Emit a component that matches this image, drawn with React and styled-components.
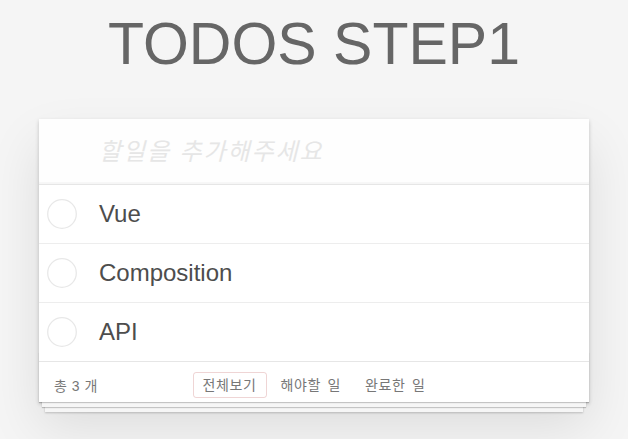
import React from 'react'
import styled, { createGlobalStyle } from 'styled-components'

const todos = [
    { id: 1, title: 'Vue' },
    { id: 2, title: 'Composition' },
    { id: 3, title: 'API' },
]

const filters = ['전체보기', '해야할 일', '완료한 일']

export default function App() {
    return (
        <>
            <GlobalStyle />
            <Page>
                <Title>TODOS STEP1</Title>
                <Card>
                    <NewTodo placeholder="할일을 추가해주세요" />
                    <List>
                        {todos.map(todo => (
                            <Item key={todo.id}>
                                <Toggle>
                                    <svg width="30" height="30" viewBox="0 0 30 30">
                                        <circle cx="15" cy="15" r="14.3" fill="none" stroke="#e8e8e8" strokeWidth="1.3" />
                                    </svg>
                                </Toggle>
                                <Label>{todo.title}</Label>
                            </Item>
                        ))}
                    </List>
                    <Footer>
                        <Count>총 3 개</Count>
                        <Filters>
                            {filters.map((f, i) => (
                                <Filter key={f} selected={i === 0}>{f}</Filter>
                            ))}
                        </Filters>
                        <span />
                    </Footer>
                </Card>
            </Page>
        </>
    )
}

const GlobalStyle = createGlobalStyle`
    html, body {
        margin: 0;
        padding: 0;
        background: #f5f5f5;
    }
    body {
        font-family: "Liberation Sans", "Noto Sans CJK KR", Arial, sans-serif;
        color: #4d4d4d;
        -webkit-font-smoothing: antialiased;
    }
`

const Page = styled.div`
    width: 550px;
    min-height: 439px;
    margin: 0 auto;
    padding: 1px 0 0;
    box-sizing: border-box;
`

const Title = styled.h1`
    margin: 9px 0 41px;
    font-size: 59px;
    line-height: 68px;
    font-weight: 400;
    text-align: center;
    color: #666;
`

const Card = styled.section`
    background: #fff;
    box-shadow: 0 2px 4px 0 rgba(0, 0, 0, 0.2), 0 25px 50px 0 rgba(0, 0, 0, 0.1);
`

const NewTodo = styled.input`
    display: block;
    box-sizing: border-box;
    width: 100%;
    height: 65px;
    margin: 0;
    padding: 16px 16px 16px 60px;
    border: none;
    outline: none;
    background: rgba(0, 0, 0, 0.003);
    box-shadow: inset 0 -2px 1px rgba(0, 0, 0, 0.03);
    font-family: "Liberation Sans", "Noto Sans CJK KR", sans-serif;
    font-size: 24px;
    color: #4d4d4d;

    &::placeholder {
        font-style: italic;
        letter-spacing: 1.9px;
        color: #e6e6e6;
    }
`

const List = styled.ul`
    margin: 0;
    padding: 0;
    list-style: none;
    border-top: 1px solid #e6e6e6;
`

const Item = styled.li`
    display: flex;
    align-items: center;
    border-bottom: 1px solid #ededed;
    font-size: 24px;

    &:last-child {
        border-bottom: none;
    }
`

const Toggle = styled.span`
    display: flex;
    width: 30px;
    height: 30px;
    margin: 0 22px 0 8px;
`

const Label = styled.label`
    padding: 15px 15px 15px 0;
    line-height: 28px;
    color: #4d4d4d;
`

const Footer = styled.footer`
    position: relative;
    display: grid;
    grid-template-columns: 1fr auto 1fr;
    align-items: center;
    height: 20px;
    padding: 10px 15px;
    border-top: 1px solid #e6e6e6;
    color: #777;
    font-size: 14px;
    font-family: "Liberation Sans", "Noto Sans CJK KR", sans-serif;

    &::before {
        content: '';
        position: absolute;
        left: 0;
        right: 0;
        bottom: 0;
        height: 50px;
        overflow: hidden;
        z-index: 0;
        box-shadow: 0 1px 1px rgba(0, 0, 0, 0.2),
            0 8px 0 -3px #f6f6f6,
            0 9px 1px -3px rgba(0, 0, 0, 0.2),
            0 16px 0 -6px #f6f6f6,
            0 17px 2px -6px rgba(0, 0, 0, 0.2);
    }
`

const Count = styled.span`
    position: relative;
    z-index: 1;
    word-spacing: 1px;
`

const Filters = styled.ul`
    position: relative;
    z-index: 1;
    display: flex;
    margin: 0;
    padding: 0;
    list-style: none;
`

const Filter = styled.li`
    margin: 0 2px;
    padding: 2px 9px 2px;
    border: 1px solid ${p => (p.selected ? 'rgba(175, 47, 47, 0.2)' : 'transparent')};
    border-radius: 3px;
    line-height: 20px;
    letter-spacing: 0.6px;
    word-spacing: 2px;
    color: #777;
`
